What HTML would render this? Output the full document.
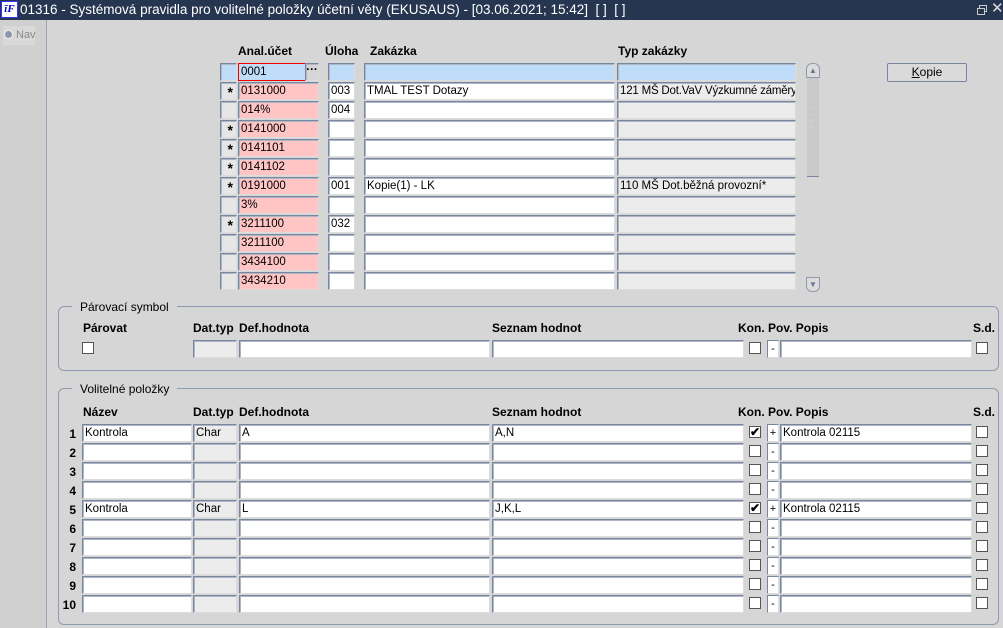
<!DOCTYPE html>
<html><head><meta charset="utf-8"><style>
*{box-sizing:border-box}
body{margin:0;width:1003px;height:628px;overflow:hidden;background:#d6d6d6;font-family:"Liberation Sans",Arial,sans-serif;font-size:12px;position:relative}
.a{position:absolute}
.t{position:absolute;top:0;left:0;width:1003px;height:20px;background:#273650;color:#fff;font-size:13.5px;line-height:20px}
.f{position:absolute;height:18px;border:1px solid;border-color:#7886a0 #dcdcdc #dcdcdc #7886a0;box-shadow:inset 1px 1px 0 #aeb6c6;background:#fff;line-height:16px;padding-left:2px;white-space:nowrap;overflow:hidden;color:#000;font-size:11.5px}
.p{background:#ffc4c4}
.g{background:#ececec}
.b{background:#bfdcf8}
.m{background:#e6e6e6;text-align:right;padding-right:3px;font-size:14px;line-height:19px;font-weight:bold}
.h{position:absolute;font-weight:bold;font-size:12px}
.cb{position:absolute;width:12px;height:12px;border:1px solid #555;background:#fff}
.n{position:absolute;font-weight:bold;width:16px;text-align:right}
.grp{position:absolute;border:1px solid #8e9ab0;border-radius:6px}
.gl{position:absolute;background:#d6d6d6;padding:0 8px;font-size:12px}
.pv{position:absolute;width:12px;height:18px;border:1px solid;border-color:#7886a0 #dcdcdc #dcdcdc #7886a0;background:#fff;font-size:11px;line-height:16px;text-align:center}
</style></head><body>
<div class="t"><span class="a" style="left:1px;top:1px;width:17px;height:17px;background:#fff;border:1px solid #33f;color:#00c;font:bold italic 11px/15px 'Liberation Serif',serif;text-align:center">īF</span><span class="a" style="left:20px">01316 - Systémová pravidla pro volitelné položky účetní věty (EKUSAUS) - [03.06.2021; 15:42]&nbsp; [ ]&nbsp; [ ]</span>
<span class="a" style="left:979px;top:5px;width:8px;height:7px;border:1px solid #ccc"></span><span class="a" style="left:977px;top:8px;width:8px;height:7px;border:1px solid #ccc;background:#273650"></span>
<span class="a" style="left:991px;top:-1px;font-size:15px;color:#ddd">✕</span></div>
<div class="a" style="left:0;top:20px;width:47px;height:608px;background:#d0d0d0;border-right:1px solid #9aa6b8"></div>
<div class="a" style="left:3px;top:26px;width:32px;height:19px;background:#d9d9d9;color:#888;font-size:11px;line-height:19px;padding-left:13px">Nav</div>
<div class="a" style="left:4px;top:30px;width:9px;height:9px;border-radius:50%;background:#8a96aa;border:1px solid #eee"></div>

<div class="h" style="left:238px;top:44px">Anal.účet</div>
<div class="h" style="left:325px;top:44px">Úloha</div>
<div class="h" style="left:370px;top:44px">Zakázka</div>
<div class="h" style="left:618px;top:44px">Typ zakázky</div>

<div class="f b" style="left:220px;top:63px;width:17px"></div>
<div class="f b" style="left:238px;top:63px;width:68px;border:1px solid #e00;box-shadow:none">0001</div>
<div class="f" style="left:305px;top:63px;width:14px;background:#d6d6d6;font-weight:bold;padding:0;text-align:center;line-height:12px">···</div>
<div class="f b" style="left:328px;top:63px;width:27px"></div>
<div class="f b" style="left:364px;top:63px;width:251px"></div>
<div class="f b" style="left:617px;top:63px;width:179px"></div>

<div class="f m" style="left:220px;top:82px;width:17px">*</div><div class="f p" style="left:238px;top:82px;width:81px">0131000</div><div class="f" style="left:328px;top:82px;width:27px">003</div><div class="f" style="left:364px;top:82px;width:251px">TMAL TEST Dotazy</div><div class="f g" style="left:617px;top:82px;width:179px;letter-spacing:-0.2px">121 MŠ Dot.VaV Výzkumné záměry'</div>
<div class="f m" style="left:220px;top:101px;width:17px"></div><div class="f p" style="left:238px;top:101px;width:81px">014%</div><div class="f" style="left:328px;top:101px;width:27px">004</div><div class="f" style="left:364px;top:101px;width:251px"></div><div class="f g" style="left:617px;top:101px;width:179px"></div>
<div class="f m" style="left:220px;top:120px;width:17px">*</div><div class="f p" style="left:238px;top:120px;width:81px">0141000</div><div class="f" style="left:328px;top:120px;width:27px"></div><div class="f" style="left:364px;top:120px;width:251px"></div><div class="f g" style="left:617px;top:120px;width:179px"></div>
<div class="f m" style="left:220px;top:139px;width:17px">*</div><div class="f p" style="left:238px;top:139px;width:81px">0141101</div><div class="f" style="left:328px;top:139px;width:27px"></div><div class="f" style="left:364px;top:139px;width:251px"></div><div class="f g" style="left:617px;top:139px;width:179px"></div>
<div class="f m" style="left:220px;top:158px;width:17px">*</div><div class="f p" style="left:238px;top:158px;width:81px">0141102</div><div class="f" style="left:328px;top:158px;width:27px"></div><div class="f" style="left:364px;top:158px;width:251px"></div><div class="f g" style="left:617px;top:158px;width:179px"></div>
<div class="f m" style="left:220px;top:177px;width:17px">*</div><div class="f p" style="left:238px;top:177px;width:81px">0191000</div><div class="f" style="left:328px;top:177px;width:27px">001</div><div class="f" style="left:364px;top:177px;width:251px">Kopie(1) - LK</div><div class="f g" style="left:617px;top:177px;width:179px">110 MŠ Dot.běžná provozní*</div>
<div class="f m" style="left:220px;top:196px;width:17px"></div><div class="f p" style="left:238px;top:196px;width:81px">3%</div><div class="f" style="left:328px;top:196px;width:27px"></div><div class="f" style="left:364px;top:196px;width:251px"></div><div class="f g" style="left:617px;top:196px;width:179px"></div>
<div class="f m" style="left:220px;top:215px;width:17px">*</div><div class="f p" style="left:238px;top:215px;width:81px">3211100</div><div class="f" style="left:328px;top:215px;width:27px">032</div><div class="f" style="left:364px;top:215px;width:251px"></div><div class="f g" style="left:617px;top:215px;width:179px"></div>
<div class="f m" style="left:220px;top:234px;width:17px"></div><div class="f p" style="left:238px;top:234px;width:81px">3211100</div><div class="f" style="left:328px;top:234px;width:27px"></div><div class="f" style="left:364px;top:234px;width:251px"></div><div class="f g" style="left:617px;top:234px;width:179px"></div>
<div class="f m" style="left:220px;top:253px;width:17px"></div><div class="f p" style="left:238px;top:253px;width:81px">3434100</div><div class="f" style="left:328px;top:253px;width:27px"></div><div class="f" style="left:364px;top:253px;width:251px"></div><div class="f g" style="left:617px;top:253px;width:179px"></div>
<div class="f m" style="left:220px;top:272px;width:17px"></div><div class="f p" style="left:238px;top:272px;width:81px">3434210</div><div class="f" style="left:328px;top:272px;width:27px"></div><div class="f" style="left:364px;top:272px;width:251px"></div><div class="f g" style="left:617px;top:272px;width:179px"></div>

<div class="a" style="left:807px;top:78px;width:12px;height:99px;background:#c9c9c9;border-bottom:1px solid #7886a0"></div>
<div class="a" style="left:809px;top:110px;color:#fff;font-size:7px;line-height:6px">˙˙<br>˙˙<br>˙˙<br>˙˙</div>
<div class="a" style="left:806px;top:63px;width:14px;height:15px;border:1px solid #8e9ab0;border-radius:6px 6px 0 0;background:#dcdcdc;color:#6a7690;font-size:8px;text-align:center;line-height:13px">▲</div>
<div class="a" style="left:806px;top:277px;width:14px;height:15px;border:1px solid #8e9ab0;border-radius:0 0 6px 6px;background:#dcdcdc;color:#6a7690;font-size:8px;text-align:center;line-height:13px">▼</div>
<div class="a" style="left:887px;top:63px;width:80px;height:19px;border:1px solid #7886a0;border-radius:2px;background:#dadada;text-align:center;line-height:17px"><u>K</u>opie</div>

<div class="grp" style="left:58px;top:306px;width:941px;height:65px"></div>
<div class="gl" style="left:72px;top:300px">Párovací symbol</div>
<div class="h" style="left:83px;top:321px">Párovat</div>
<div class="h" style="left:193px;top:321px">Dat.typ</div>
<div class="h" style="left:239px;top:321px">Def.hodnota</div>
<div class="h" style="left:492px;top:321px">Seznam hodnot</div>
<div class="h" style="left:738px;top:321px">Kon. Pov. Popis</div>
<div class="h" style="left:973px;top:321px">S.d.</div>
<div class="cb" style="left:82px;top:342px"></div>
<div class="f g" style="left:193px;top:340px;width:44px"></div>
<div class="f" style="left:239px;top:340px;width:251px"></div>
<div class="f" style="left:492px;top:340px;width:252px"></div>
<div class="cb" style="left:749px;top:342px"></div>
<div class="pv" style="left:767px;top:340px">-</div>
<div class="f" style="left:780px;top:340px;width:192px"></div>
<div class="cb" style="left:976px;top:342px"></div>

<div class="grp" style="left:58px;top:388px;width:941px;height:237px"></div>
<div class="gl" style="left:72px;top:382px">Volitelné položky</div>
<div class="h" style="left:83px;top:405px">Název</div>
<div class="h" style="left:193px;top:405px">Dat.typ</div>
<div class="h" style="left:239px;top:405px">Def.hodnota</div>
<div class="h" style="left:492px;top:405px">Seznam hodnot</div>
<div class="h" style="left:738px;top:405px">Kon. Pov. Popis</div>
<div class="h" style="left:973px;top:405px">S.d.</div>

<div class="n" style="left:60px;top:427px">1</div><div class="f" style="left:82px;top:424px;width:110px">Kontrola</div><div class="f g" style="left:193px;top:424px;width:44px">Char</div><div class="f" style="left:239px;top:424px;width:251px">A</div><div class="f" style="left:492px;top:424px;width:252px">A,N</div><div class="cb" style="left:749px;top:426px;font-size:12px;line-height:10px;text-align:center;font-weight:bold">✔</div><div class="pv" style="left:767px;top:424px">+</div><div class="f" style="left:780px;top:424px;width:192px">Kontrola 02115</div><div class="cb" style="left:976px;top:426px"></div>
<div class="n" style="left:60px;top:446px">2</div><div class="f" style="left:82px;top:443px;width:110px"></div><div class="f g" style="left:193px;top:443px;width:44px"></div><div class="f" style="left:239px;top:443px;width:251px"></div><div class="f" style="left:492px;top:443px;width:252px"></div><div class="cb" style="left:749px;top:445px"></div><div class="pv" style="left:767px;top:443px">-</div><div class="f" style="left:780px;top:443px;width:192px"></div><div class="cb" style="left:976px;top:445px"></div>
<div class="n" style="left:60px;top:465px">3</div><div class="f" style="left:82px;top:462px;width:110px"></div><div class="f g" style="left:193px;top:462px;width:44px"></div><div class="f" style="left:239px;top:462px;width:251px"></div><div class="f" style="left:492px;top:462px;width:252px"></div><div class="cb" style="left:749px;top:464px"></div><div class="pv" style="left:767px;top:462px">-</div><div class="f" style="left:780px;top:462px;width:192px"></div><div class="cb" style="left:976px;top:464px"></div>
<div class="n" style="left:60px;top:484px">4</div><div class="f" style="left:82px;top:481px;width:110px"></div><div class="f g" style="left:193px;top:481px;width:44px"></div><div class="f" style="left:239px;top:481px;width:251px"></div><div class="f" style="left:492px;top:481px;width:252px"></div><div class="cb" style="left:749px;top:483px"></div><div class="pv" style="left:767px;top:481px">-</div><div class="f" style="left:780px;top:481px;width:192px"></div><div class="cb" style="left:976px;top:483px"></div>
<div class="n" style="left:60px;top:503px">5</div><div class="f" style="left:82px;top:500px;width:110px">Kontrola</div><div class="f g" style="left:193px;top:500px;width:44px">Char</div><div class="f" style="left:239px;top:500px;width:251px">L</div><div class="f" style="left:492px;top:500px;width:252px">J,K,L</div><div class="cb" style="left:749px;top:502px;font-size:12px;line-height:10px;text-align:center;font-weight:bold">✔</div><div class="pv" style="left:767px;top:500px">+</div><div class="f" style="left:780px;top:500px;width:192px">Kontrola 02115</div><div class="cb" style="left:976px;top:502px"></div>
<div class="n" style="left:60px;top:522px">6</div><div class="f" style="left:82px;top:519px;width:110px"></div><div class="f g" style="left:193px;top:519px;width:44px"></div><div class="f" style="left:239px;top:519px;width:251px"></div><div class="f" style="left:492px;top:519px;width:252px"></div><div class="cb" style="left:749px;top:521px"></div><div class="pv" style="left:767px;top:519px">-</div><div class="f" style="left:780px;top:519px;width:192px"></div><div class="cb" style="left:976px;top:521px"></div>
<div class="n" style="left:60px;top:541px">7</div><div class="f" style="left:82px;top:538px;width:110px"></div><div class="f g" style="left:193px;top:538px;width:44px"></div><div class="f" style="left:239px;top:538px;width:251px"></div><div class="f" style="left:492px;top:538px;width:252px"></div><div class="cb" style="left:749px;top:540px"></div><div class="pv" style="left:767px;top:538px">-</div><div class="f" style="left:780px;top:538px;width:192px"></div><div class="cb" style="left:976px;top:540px"></div>
<div class="n" style="left:60px;top:560px">8</div><div class="f" style="left:82px;top:557px;width:110px"></div><div class="f g" style="left:193px;top:557px;width:44px"></div><div class="f" style="left:239px;top:557px;width:251px"></div><div class="f" style="left:492px;top:557px;width:252px"></div><div class="cb" style="left:749px;top:559px"></div><div class="pv" style="left:767px;top:557px">-</div><div class="f" style="left:780px;top:557px;width:192px"></div><div class="cb" style="left:976px;top:559px"></div>
<div class="n" style="left:60px;top:579px">9</div><div class="f" style="left:82px;top:576px;width:110px"></div><div class="f g" style="left:193px;top:576px;width:44px"></div><div class="f" style="left:239px;top:576px;width:251px"></div><div class="f" style="left:492px;top:576px;width:252px"></div><div class="cb" style="left:749px;top:578px"></div><div class="pv" style="left:767px;top:576px">-</div><div class="f" style="left:780px;top:576px;width:192px"></div><div class="cb" style="left:976px;top:578px"></div>
<div class="n" style="left:60px;top:598px">10</div><div class="f" style="left:82px;top:595px;width:110px"></div><div class="f g" style="left:193px;top:595px;width:44px"></div><div class="f" style="left:239px;top:595px;width:251px"></div><div class="f" style="left:492px;top:595px;width:252px"></div><div class="cb" style="left:749px;top:597px"></div><div class="pv" style="left:767px;top:595px">-</div><div class="f" style="left:780px;top:595px;width:192px"></div><div class="cb" style="left:976px;top:597px"></div>
</body></html>
